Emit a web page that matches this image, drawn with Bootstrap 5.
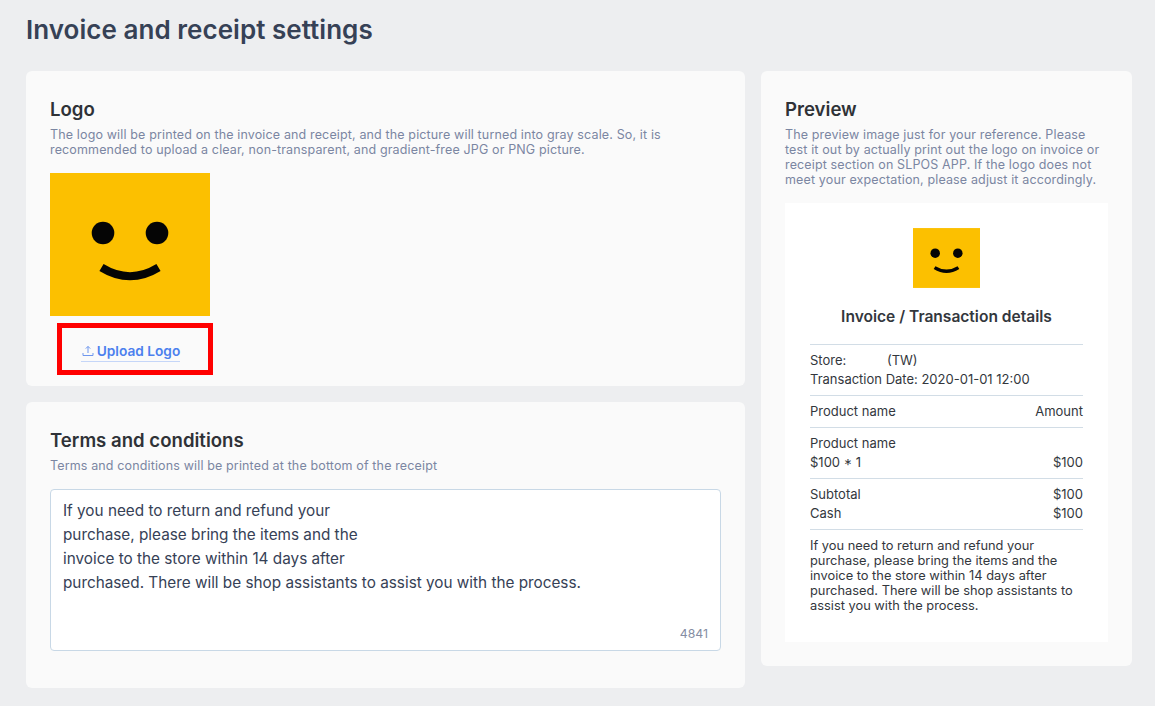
<!DOCTYPE html>
<html lang="en">
<head>
<meta charset="utf-8">
<title>Invoice and receipt settings</title>
<link rel="stylesheet" href="https://cdn.jsdelivr.net/npm/bootstrap@5.3.0/dist/css/bootstrap.min.css">
<style>
html,body{height:706px;overflow:hidden}
body{background:#edeef0;font-family:Inter,"Liberation Sans",sans-serif;color:#333a47}
.page-wrap{padding:13px 23px 0 26px}
.page-title{font-size:26px;line-height:34px;font-weight:600;color:#364156;margin:0 0 24px;letter-spacing:.04px}
.left-col{width:719px}
.right-col{width:371px}
.panel{background:#fafafa;border-radius:6px;padding:24px}
.panel-logo{height:315px}
.panel-terms{height:286px}
.panel-preview{height:595px}
.panel-title{font-size:18.6px;line-height:28px;font-weight:600;color:#2f3237;margin:0}
.hint{font-size:12.5px;line-height:15px;color:#7b86a2;margin:4px 0 0;letter-spacing:.14px}
.logo-big{display:block;width:160px;height:143px;margin-top:16px}
.upload-box{width:156px;height:52px;margin:7px 0 0 7px;border:5px solid #f00;padding-right:9px}
.upload-link{font-size:13.7px;line-height:20px;font-weight:600;color:#4c80ee;text-decoration:none;border-bottom:1px solid #c5d6f8;padding:0 0 0 1px;margin-top:5px;gap:3px}
.terms-box{height:162px;margin-top:16px;background:#fff;border:1px solid #c8d8e6;border-radius:4px;padding:9px 12px;font-size:15.3px;line-height:24px;color:#364156}
.counter{position:absolute;right:12px;bottom:8px;font-size:12.3px;line-height:16px;color:#858da3}
.receipt{background:#fff;height:439px;margin-top:16px;padding:25px;font-size:13px;line-height:19px;color:#33373d}
.logo-small{display:block;width:67px;height:60px;margin:0 auto}
.receipt-title{font-size:15.55px;line-height:24px;font-weight:600;text-align:center;margin:17px 0 15px;color:#33373d}
.rc-sec{border-top:1px solid #d2dde6;padding:6px 0}
.rc-sec-a{height:51px}
.rc-sec-b{height:32px}
.rc-sec-c{height:51px}
.rc-sec-d{height:51px}
.rc-note{line-height:15px;padding-top:8px;font-size:12.85px}
.masked{display:inline-block;width:37px}
</style>
</head>
<body>
<div class="page-wrap">
  <h1 class="page-title">Invoice and receipt settings</h1>
  <div class="d-flex align-items-start gap-3">
    <div class="left-col d-flex flex-column gap-3">
      <section class="panel panel-logo">
        <h2 class="panel-title">Logo</h2>
        <p class="hint">The logo will be printed on the invoice and receipt, and the picture will turned into gray scale. So, it is recommended to upload a clear, non-transparent, and gradient-free JPG or PNG picture.</p>
        <svg class="logo-big" viewBox="0 0 160 143" aria-hidden="true"><rect width="160" height="143" fill="#fcc000"/><circle cx="53" cy="60" r="11.3" fill="#050505"/><circle cx="107" cy="60" r="11.3" fill="#050505"/><path d="M51.5 94.5Q80 112 108.5 94.5" fill="none" stroke="#050505" stroke-width="8"/></svg>
        <div class="upload-box d-flex align-items-center justify-content-center">
          <a class="upload-link d-inline-flex align-items-center" href="#">
            <svg width="12" height="12" viewBox="0 0 12 12" fill="none" stroke="#6f97ee" stroke-width="1" aria-hidden="true"><path d="M6 8V1.5M3.8 3.6 6 1.4l2.2 2.2M1 8v2.5h10V8"/></svg>
            Upload Logo
          </a>
        </div>
      </section>
      <section class="panel panel-terms">
        <h2 class="panel-title">Terms and conditions</h2>
        <p class="hint">Terms and conditions will be printed at the bottom of the receipt</p>
        <div class="terms-box position-relative">
          If you need to return and refund your<br>
          purchase, please bring the items and the<br>
          invoice to the store within 14 days after<br>
          purchased. There will be shop assistants to assist you with the process.
          <span class="counter">4841</span>
        </div>
      </section>
    </div>
    <aside class="right-col">
      <section class="panel panel-preview">
        <h2 class="panel-title">Preview</h2>
        <p class="hint">The preview image just for your reference. Please test it out by actually print out the logo on invoice or receipt section on SLPOS APP. If the logo does not meet your expectation, please adjust it accordingly.</p>
        <div class="receipt">
          <svg class="logo-small" viewBox="0 0 160 143" aria-hidden="true"><rect width="160" height="143" fill="#fcc000"/><circle cx="53" cy="60" r="11.3" fill="#050505"/><circle cx="107" cy="60" r="11.3" fill="#050505"/><path d="M51.5 94.5Q80 112 108.5 94.5" fill="none" stroke="#050505" stroke-width="8"/></svg>
          <div class="receipt-title">Invoice / Transaction details</div>
          <div class="rc-sec rc-sec-a">
            <div>Store: <span class="masked"></span>(TW)</div>
            <div>Transaction Date: 2020-01-01 12:00</div>
          </div>
          <div class="rc-sec rc-sec-b d-flex justify-content-between"><span>Product name</span><span>Amount</span></div>
          <div class="rc-sec rc-sec-c">
            <div>Product name</div>
            <div class="d-flex justify-content-between"><span>$100 * 1</span><span>$100</span></div>
          </div>
          <div class="rc-sec rc-sec-d">
            <div class="d-flex justify-content-between"><span>Subtotal</span><span>$100</span></div>
            <div class="d-flex justify-content-between"><span>Cash</span><span>$100</span></div>
          </div>
          <div class="rc-sec rc-note">If you need to return and refund your purchase, please bring the items and the invoice to the store within 14 days after purchased. There will be shop assistants to assist you with the process.</div>
        </div>
      </section>
    </aside>
  </div>
</div>
<script src="https://cdn.jsdelivr.net/npm/bootstrap@5.3.0/dist/js/bootstrap.bundle.min.js"></script>
</body>
</html>
